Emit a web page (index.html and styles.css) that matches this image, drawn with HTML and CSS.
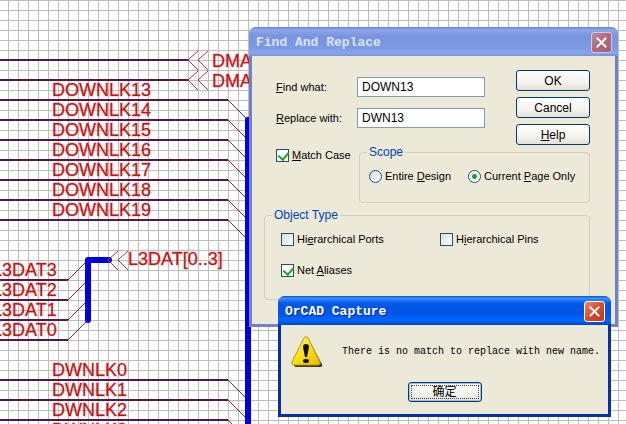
FILE: index.html
```html
<!DOCTYPE html>
<html lang="en">
<head>
    <meta charset="UTF-8">
    <meta name="viewport" content="width=device-width, initial-scale=1.0">
    <title>OrCAD Capture</title>
    <link rel="stylesheet" href="styles.css">
</head>
<body>

<main class="sheet">
    <svg class="schematic" aria-label="Schematic">
        <!-- wires -->
        <path class="wire" d="M0 60H188M0 80H188M0 100H228M0 120H228M0 140H228M0 160H228M0 180H228M0 200H228M0 220H228"/>
        <path class="wire" d="M0 280H68M0 300H68M0 320H68M0 340H68M0 380H228M0 400H228M0 420H228"/>
        <!-- bus entries -->
        <path class="entry" d="M228 100l20 20M228 120l20 20M228 140l20 20M228 160l20 20M228 180l20 20M228 200l20 20M228 220l20 20"/>
        <path class="entry" d="M68 280l20 -20M68 300l20 -20M68 320l20 -20M68 340l20 -20M228 380l20 20M228 400l20 20M228 420l20 20"/>
        <!-- buses -->
        <path class="bus" d="M248 120V440M109 260H88V320"/>
        <!-- off-page connectors -->
        <path class="connector" d="M198 51l-10 9l10 10M208 51l-10 9l10 10M198 71l-10 9l10 10M208 71l-10 9l10 10M118 251l-10 9l10 10M128 251l-10 9l10 10"/>

        <g class="net">
            <text x="212" y="67">DMA</text>
            <text x="212" y="87">DMA</text>
            <text x="52" y="96">DOWNLK13</text>
            <text x="52" y="116">DOWNLK14</text>
            <text x="52" y="136">DOWNLK15</text>
            <text x="52" y="156">DOWNLK16</text>
            <text x="52" y="176">DOWNLK17</text>
            <text x="52" y="196">DOWNLK18</text>
            <text x="52" y="216">DOWNLK19</text>
            <text x="128" y="265">L3DAT[0..3]</text>
            <text x="-8" y="276">L3DAT3</text>
            <text x="-8" y="296">L3DAT2</text>
            <text x="-8" y="316">L3DAT1</text>
            <text x="-8" y="336">L3DAT0</text>
            <text x="52" y="376">DWNLK0</text>
            <text x="52" y="396">DWNLK1</text>
            <text x="52" y="416">DWNLK2</text>
            <text x="52" y="436">DWNLK3</text>
        </g>
    </svg>

    <section class="window find" role="dialog" aria-labelledby="find-title">
        <header class="titlebar">
            <h2 id="find-title">Find And Replace</h2>
            <button type="button" class="close" aria-label="Close">
                <svg viewBox="0 0 20 20"><path d="M5 5L15 15M15 5L5 15"/></svg>
            </button>
        </header>
        <form class="find-body">
            <div class="top">
                <div class="fields">
                    <label for="find"><u>F</u>ind what:</label>
                    <input type="text" id="find" value="DOWN13">
                    <label for="replace"><u>R</u>eplace with:</label>
                    <input type="text" id="replace" value="DWN13">
                </div>
                <div class="actions">
                    <button type="button" class="btn">OK</button>
                    <button type="button" class="btn">Cancel</button>
                    <button type="button" class="btn"><u>H</u>elp</button>
                </div>
            </div>
            <div class="options">
                <label class="choice"><input type="checkbox" checked><span><u>M</u>atch Case</span></label>
                <fieldset class="scope">
                    <legend>Scope</legend>
                    <label class="choice"><input type="radio" name="scope"><span>Entire <u>D</u>esign</span></label>
                    <label class="choice"><input type="radio" name="scope" checked><span>Current <u>P</u>age Only</span></label>
                </fieldset>
            </div>
            <fieldset class="objects">
                <legend>Object Type</legend>
                <label class="choice"><input type="checkbox"><span>Hi<u>e</u>rarchical Ports</span></label>
                <label class="choice"><input type="checkbox"><span>H<u>i</u>erarchical Pins</span></label>
                <label class="choice"><input type="checkbox" checked><span>Net <u>A</u>liases</span></label>
            </fieldset>
        </form>
    </section>

    <section class="window alert" role="alertdialog" aria-labelledby="alert-title">
        <header class="titlebar">
            <h2 id="alert-title">OrCAD Capture</h2>
            <button type="button" class="close" aria-label="Close">
                <svg viewBox="0 0 20 20"><path d="M5 5L15 15M15 5L5 15"/></svg>
            </button>
        </header>
        <div class="alert-body">
            <div class="message">
                <svg class="warning" viewBox="0 0 32 32">
                    <defs>
                        <linearGradient id="yellow" x1="0" y1="0" x2="1" y2="1">
                            <stop offset="0" stop-color="#fff68a"/>
                            <stop offset="0.5" stop-color="#fbe212"/>
                            <stop offset="1" stop-color="#e8b800"/>
                        </linearGradient>
                    </defs>
                    <path d="M17 3L31 28Q32 31 29 31H5Q3 31 3 29Z" fill="#3b3838"/>
                    <path d="M13 2Q15 -1 17 2L29 26Q30 29 27 29H3Q0 29 1 26Z" fill="url(#yellow)" stroke="#b89608"/>
                    <path d="M12 11Q12 8 15 8T18 11L16 21H14Z" fill="#111"/>
                    <ellipse cx="15" cy="25" rx="3" ry="2" fill="#111"/>
                </svg>
                <p>There is no match to replace with new name.</p>
            </div>
            <button type="button" class="btn default">确定</button>
        </div>
    </section>
</main>

</body>
</html>
```

FILE: styles.css
```css
* {
    box-sizing: border-box;
}

body {
    margin: 0;
    font-family: "Liberation Sans", Arial, sans-serif;
    font-size: 11px;
    line-height: 14px;
    color: #000;
}

.sheet {
    position: relative;
    min-height: 100vh;
    overflow: hidden;
    background-color: #fff;
    background-image:
        linear-gradient(to bottom, #bdbdbd 1px, transparent 1px),
        linear-gradient(to right, #bdbdbd 1px, transparent 1px);
    background-size: 10px 10px;
    background-position: 0 0, 8px 0;
}

/* schematic */
.schematic {
    position: absolute;
    inset: 0;
    width: 100%;
    height: 100%;
}

.schematic path {
    fill: none;
}

.wire {
    stroke: #5a1446;
    stroke-width: 2;
}

.entry {
    stroke: #7a2848;
}

.bus {
    stroke: #0000e0;
    stroke-width: 6;
    stroke-linecap: round;
    stroke-linejoin: round;
}

.connector {
    stroke: #b83030;
}

.net {
    font-size: 18px;
    fill: #cc1010;
    stroke: #cc1010;
    stroke-opacity: 0.3;
}

/* windows */
.window {
    position: absolute;
    border: 3px solid;
    border-top: 0;
    border-radius: 7px 7px 0 0;
    background: #ece9d8;
}

.titlebar {
    display: flex;
    align-items: center;
    justify-content: space-between;
    height: 29px;
    margin: 0 -3px;
    padding: 2px 6px 0 7px;
    border-radius: 7px 7px 0 0;
}

.titlebar h2 {
    margin: 0;
    font-family: "Liberation Mono", "Courier New", monospace;
    font-size: 13px;
    font-weight: bold;
}

.close {
    width: 21px;
    height: 21px;
    padding: 0;
    border: 1px solid #fff;
    border-radius: 3px;
    background: linear-gradient(135deg, #e98a6c, #d8492a 50%, #c03a18);
}

.close svg {
    display: block;
    width: 100%;
    height: 100%;
}

.close path {
    stroke: #fff;
    stroke-width: 2;
}

.find {
    left: 249px;
    top: 27px;
    width: 369px;
    border-color: #7580cc;
}

.find .titlebar {
    background: linear-gradient(#6a80d0, #8fa8ee 10%, #7a94de 30%, #7d99e4 70%, #86a6ee 90%, #7890d8);
    color: #d8e4f8;
}

.find .close {
    border-color: #d0c8e4;
    background: linear-gradient(135deg, #c08a9c, #b06678 50%, #a86070);
}

.find-body {
    padding: 14px 25px 24px 12px;
}

.top {
    display: flex;
    justify-content: space-between;
    align-items: flex-start;
}

.fields {
    display: grid;
    grid-template-columns: 81px 128px;
    row-gap: 11px;
    align-items: center;
    padding: 7px 0 0 12px;
}

.fields input {
    width: 100%;
    height: 20px;
    padding: 0 4px;
    border: 1px solid #7f9db9;
    background: #fff;
    font: inherit;
    font-size: 12px;
}

.actions {
    display: flex;
    flex-direction: column;
    gap: 6px;
}

.btn {
    width: 74px;
    height: 21px;
    padding: 0;
    border: 1px solid #003c74;
    border-radius: 3px;
    background: linear-gradient(#fff, #f4f3ee 60%, #e4e0d4);
    font: inherit;
    font-size: 12px;
    color: #000;
}

.options {
    display: grid;
    grid-template-columns: 83px minmax(0, 1fr);
    align-items: start;
    padding-left: 12px;
}

.options > .choice {
    padding-top: 3px;
}

.choice {
    display: flex;
    align-items: center;
    gap: 3px;
    white-space: nowrap;
}

.choice input {
    appearance: none;
    flex: none;
    width: 13px;
    height: 13px;
    margin: 0;
    border: 1px solid #1c5180;
    background: linear-gradient(135deg, #dcdcd7, #fff);
}

.choice input[type="radio"] {
    border-radius: 50%;
}

.choice input[type="radio"]:checked {
    background: radial-gradient(circle, #21a121 2px, #fff 3px);
}

.choice input[type="checkbox"]:checked {
    background: #fff;
}

.choice input[type="checkbox"]:checked::before {
    content: "";
    display: block;
    width: 5px;
    height: 8px;
    margin: 0 0 0 3px;
    border: solid #21a121;
    border-width: 0 2px 2px 0;
    transform: rotate(40deg);
}

fieldset {
    margin: 0;
    border: 1px solid #d0d0bf;
    border-radius: 4px;
}

legend {
    padding: 0 2px;
    color: #0046b5;
    font-size: 12px;
}

.scope {
    display: flex;
    gap: 17px;
    height: 58px;
    padding: 9px 9px 0;
}

.scope .choice {
    height: 16px;
}

.scope legend {
    margin-left: -2px;
}

.objects {
    display: grid;
    grid-template-columns: 159px 1fr;
    row-gap: 17px;
    align-content: start;
    height: 92px;
    margin-top: 5px;
    padding: 10px 16px 0;
}

.objects legend {
    margin-left: -9px;
}

.alert {
    left: 278px;
    top: 296px;
    width: 333px;
    border-color: #0831a8;
}

.alert .titlebar {
    background: linear-gradient(#0a50d0, #3a90ff 8%, #0058e8 25%, #0056e4 60%, #0066ff 85%, #0044c8);
    color: #fff;
}

.alert .titlebar h2 {
    text-shadow: 1px 1px #0a2a80;
}

.alert-body {
    display: flex;
    flex-direction: column;
    align-items: center;
    gap: 14px;
    padding: 11px 10px 12px;
}

.message {
    display: flex;
    align-items: center;
    gap: 19px;
    width: 100%;
}

.message p {
    margin: 0;
    font-family: "Liberation Mono", "Courier New", monospace;
    font-size: 10px;
    white-space: nowrap;
}

.warning {
    width: 32px;
    height: 32px;
    flex: none;
}

.default {
    height: 20px;
    box-shadow: inset 0 0 0 1px #9ebcec;
    outline: 1px dotted #444;
    outline-offset: -4px;
    font-family: "Liberation Sans", "Noto Sans CJK SC", sans-serif;
}
```
